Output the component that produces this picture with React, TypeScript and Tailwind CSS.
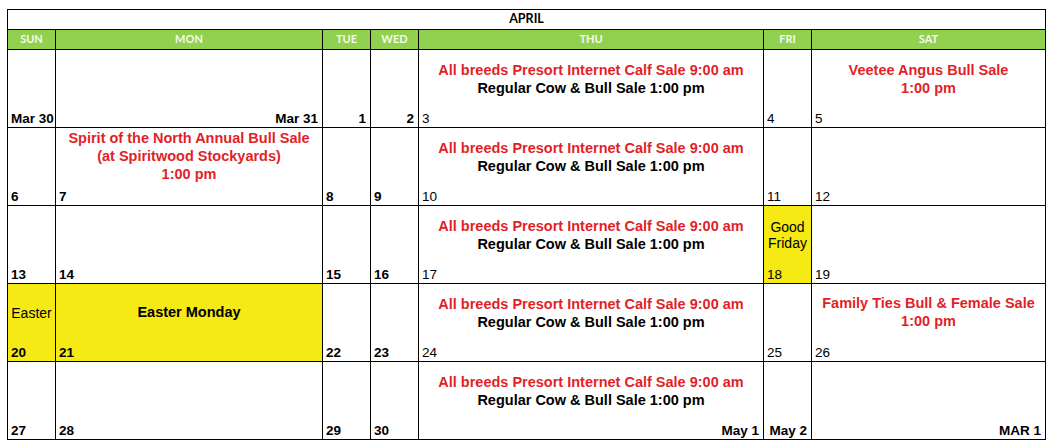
import React from 'react';

type Cell = {
  date: string;
  right?: boolean;
  thin?: boolean;
  yellow?: boolean;
  ev?: React.ReactNode;
};

const Sale = () => (
  <div className="pt-[11px] text-center text-[14.5px] font-bold leading-[18px]">
    <div className="text-[#e21f26]">All breeds Presort Internet Calf Sale 9:00 am</div>
    <div className="text-black">Regular Cow &amp; Bull Sale 1:00 pm</div>
  </div>
);

const RedBlock = ({ lines, pad }: { lines: string[]; pad: string }) => (
  <div className={`${pad} text-center text-[14.5px] font-bold leading-[18px] text-[#e21f26]`}>
    {lines.map((l) => (
      <div key={l}>{l}</div>
    ))}
  </div>
);

const weeks: Cell[][] = [
  [
    { date: 'Mar 30' },
    { date: 'Mar 31', right: true },
    { date: '1', right: true },
    { date: '2', right: true },
    { date: '3', thin: true, ev: <Sale /> },
    { date: '4', thin: true },
    { date: '5', thin: true, ev: <RedBlock pad="pt-[11px]" lines={['Veetee Angus Bull Sale', '1:00 pm']} /> },
  ],
  [
    { date: '6' },
    {
      date: '7',
      ev: (
        <RedBlock
          pad="pt-[1px]"
          lines={['Spirit of the North Annual Bull Sale', '(at Spiritwood Stockyards)', '1:00 pm']}
        />
      ),
    },
    { date: '8' },
    { date: '9' },
    { date: '10', thin: true, ev: <Sale /> },
    { date: '11', thin: true },
    { date: '12', thin: true },
  ],
  [
    { date: '13' },
    { date: '14' },
    { date: '15' },
    { date: '16' },
    { date: '17', thin: true, ev: <Sale /> },
    {
      date: '18',
      thin: true,
      yellow: true,
      ev: (
        <div className="pt-[13px] text-center text-[14px] leading-[16px] text-black">
          <div>Good</div>
          <div>Friday</div>
        </div>
      ),
    },
    { date: '19', thin: true },
  ],
  [
    {
      date: '20',
      yellow: true,
      ev: <div className="pt-[20px] text-center text-[14px] leading-[18px] text-black">Easter</div>,
    },
    {
      date: '21',
      yellow: true,
      ev: <div className="pt-[19px] text-center text-[14.5px] font-bold leading-[18px] text-black">Easter Monday</div>,
    },
    { date: '22' },
    { date: '23' },
    { date: '24', thin: true, ev: <Sale /> },
    { date: '25', thin: true },
    {
      date: '26',
      thin: true,
      ev: <RedBlock pad="pt-[10px]" lines={['Family Ties Bull & Female Sale', '1:00 pm']} />,
    },
  ],
  [
    { date: '27' },
    { date: '28' },
    { date: '29' },
    { date: '30' },
    { date: 'May 1', right: true, ev: <Sale /> },
    { date: 'May 2', right: true },
    { date: 'MAR 1', right: true },
  ],
];

const days = ['SUN', 'MON', 'TUE', 'WED', 'THU', 'FRI', 'SAT'];

export default function App() {
  return (
    <div className="min-h-screen bg-white pl-[7px] pt-[9px] font-['Liberation_Sans',Arial,sans-serif]">
      <div className="grid w-[1039px] grid-cols-[48px_267px_48px_48px_345px_48px_234px] border-l border-t border-black">
        {/* Month title */}
        <div className="col-span-7 flex h-[20px] items-center justify-center border-b border-r border-black font-['Lato',sans-serif] text-[12.5px] font-bold text-black">
          APRIL
        </div>

        {/* Day names */}
        {days.map((d) => (
          <div
            key={d}
            className="flex h-[20px] items-center justify-center border-b border-r border-black bg-[#92d050] font-['Lato',sans-serif] text-[11px] font-bold text-[#f4faec]"
          >
            {d}
          </div>
        ))}

        {/* Weeks */}
        {weeks.map((week, wi) =>
          week.map((c, ci) => (
            <div
              key={`${wi}-${ci}`}
              className={`flex h-[78px] flex-col border-b border-r border-black ${c.yellow ? 'bg-[#f6ea14]' : 'bg-white'}`}
            >
              {c.ev}
              <div
                className={`mt-auto text-[13.5px] leading-[16px] text-black whitespace-nowrap ${
                  c.right ? 'pr-[4px] text-right' : 'pl-[3px] text-left'
                } ${c.thin ? 'font-normal' : 'font-bold'}`}
              >
                {c.date}
              </div>
            </div>
          ))
        )}
      </div>
    </div>
  );
}
